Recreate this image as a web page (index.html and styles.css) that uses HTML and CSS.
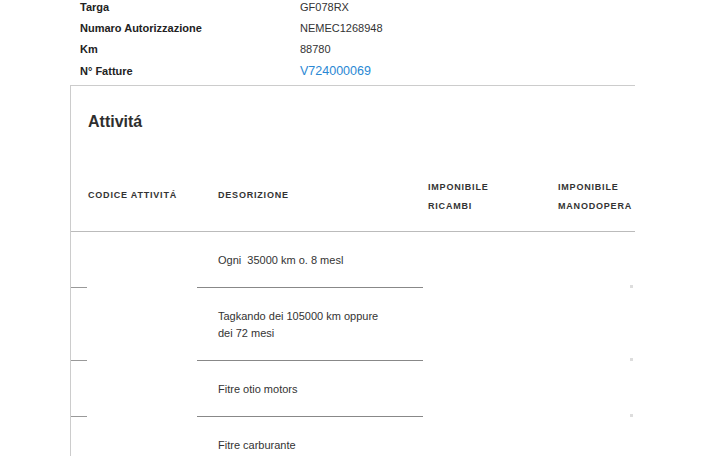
FILE: index.html
```html
<!DOCTYPE html>
<html lang="it">
<head>
  <meta charset="UTF-8" />
  <meta name="viewport" content="width=device-width, initial-scale=1.0"/>
  <title>Dettaglio intervento</title>
  <link rel="stylesheet" href="styles.css">
</head>
<body>
  <div class="info">
    <div class="info-row"><span class="info-label">Targa</span><span class="info-value">GF078RX</span></div>
    <div class="info-row"><span class="info-label">Numaro Autorizzazione</span><span class="info-value">NEMEC1268948</span></div>
    <div class="info-row"><span class="info-label">Km</span><span class="info-value">88780</span></div>
    <div class="info-row"><span class="info-label">N° Fatture</span><a class="info-link" href="#">V724000069</a></div>
  </div>

  <div class="card">
    <h3 class="card-title">Attivitá</h3>

    <div class="table">
      <div class="table-head">
        <div class="th col-code">CODICE ATTIVITÁ</div>
        <div class="th col-desc">DESORIZIONE</div>
        <div class="th col-ric two-line">IMPONIBILE<br>RICAMBI</div>
        <div class="th col-mano two-line">IMPONIBILE<br>MANODOPERA</div>
      </div>

      <div class="table-row">
        <div class="td col-code"></div>
        <div class="td col-desc">Ogni&nbsp; 35000 km o. 8 mesl</div>
        <div class="td col-ric"></div>
        <div class="td col-mano"></div>
      </div>
      <div class="table-row">
        <div class="td col-code"></div>
        <div class="td col-desc">Tagkando dei 105000 km oppure<br>dei 72 mesi</div>
        <div class="td col-ric"></div>
        <div class="td col-mano"></div>
      </div>
      <div class="table-row">
        <div class="td col-code"></div>
        <div class="td col-desc">Fitre otio motors</div>
        <div class="td col-ric"></div>
        <div class="td col-mano"></div>
      </div>
      <div class="table-row last">
        <div class="td col-code"></div>
        <div class="td col-desc">Fitre carburante</div>
        <div class="td col-ric"></div>
        <div class="td col-mano"></div>
      </div>
    </div>
  </div>
</body>
</html>
```

FILE: styles.css
```css
* {
  box-sizing: border-box;
  font-family: 'Liberation Sans', Arial, sans-serif;
}

body {
  margin: 0;
  background: #fff;
  color: #333;
  overflow: hidden;
}

/* Vehicle info */
.info {
  margin-top: -4px;
  padding-left: 80px;
}

.info-row {
  display: flex;
  height: 21.3px;
  align-items: center;
  font-size: 11px;
}

.info-label {
  width: 220px;
  font-weight: bold;
  color: #222;
}

.info-value {
  color: #333;
}

.info-link {
  color: #2a88d4;
  font-size: 12.5px;
  text-decoration: none;
}

/* Card */
.card {
  margin: 4px 0 0 70px;
  width: 565px;
  border-top: 1px solid #ccc;
  border-left: 1px solid #ccc;
  background: #fff;
}

.card-title {
  margin: 0;
  padding: 26px 0 0 17px;
  height: 72px;
  font-size: 16px;
  line-height: 20px;
  font-weight: bold;
  color: #2e2e2e;
}

.table-head,
.table-row {
  display: grid;
  grid-template-columns: 126px 226px 130px 82px;
}

.table-head {
  align-items: center;
  padding: 18px 0 17px;
  border-bottom: 1px solid #bbb;
}

.th {
  font-size: 9px;
  line-height: 19px;
  font-weight: bold;
  letter-spacing: 0.8px;
  color: #333;
}

.th.two-line {
  margin: 2px 0 -2px;
}

.th.col-code { padding-left: 17px; }
.th.col-desc { padding-left: 21px; }
.th.col-ric { padding-left: 5px; }
.th.col-mano { padding-left: 5px; }

.td {
  font-size: 11px;
  line-height: 17px;
  padding: 20px 0 18px;
  color: #333;
}

.td.col-desc {
  padding-left: 21px;
  border-bottom: 1px solid #888;
}

.td.col-code {
  background: linear-gradient(#999, #999) no-repeat left bottom / 16px 1px;
}

.td.col-mano {
  background: linear-gradient(#ddd, #ddd) no-repeat right 2px bottom / 3px 3px;
}

.table-row.last .td {
  border-bottom: none;
  background: none;
}
```
